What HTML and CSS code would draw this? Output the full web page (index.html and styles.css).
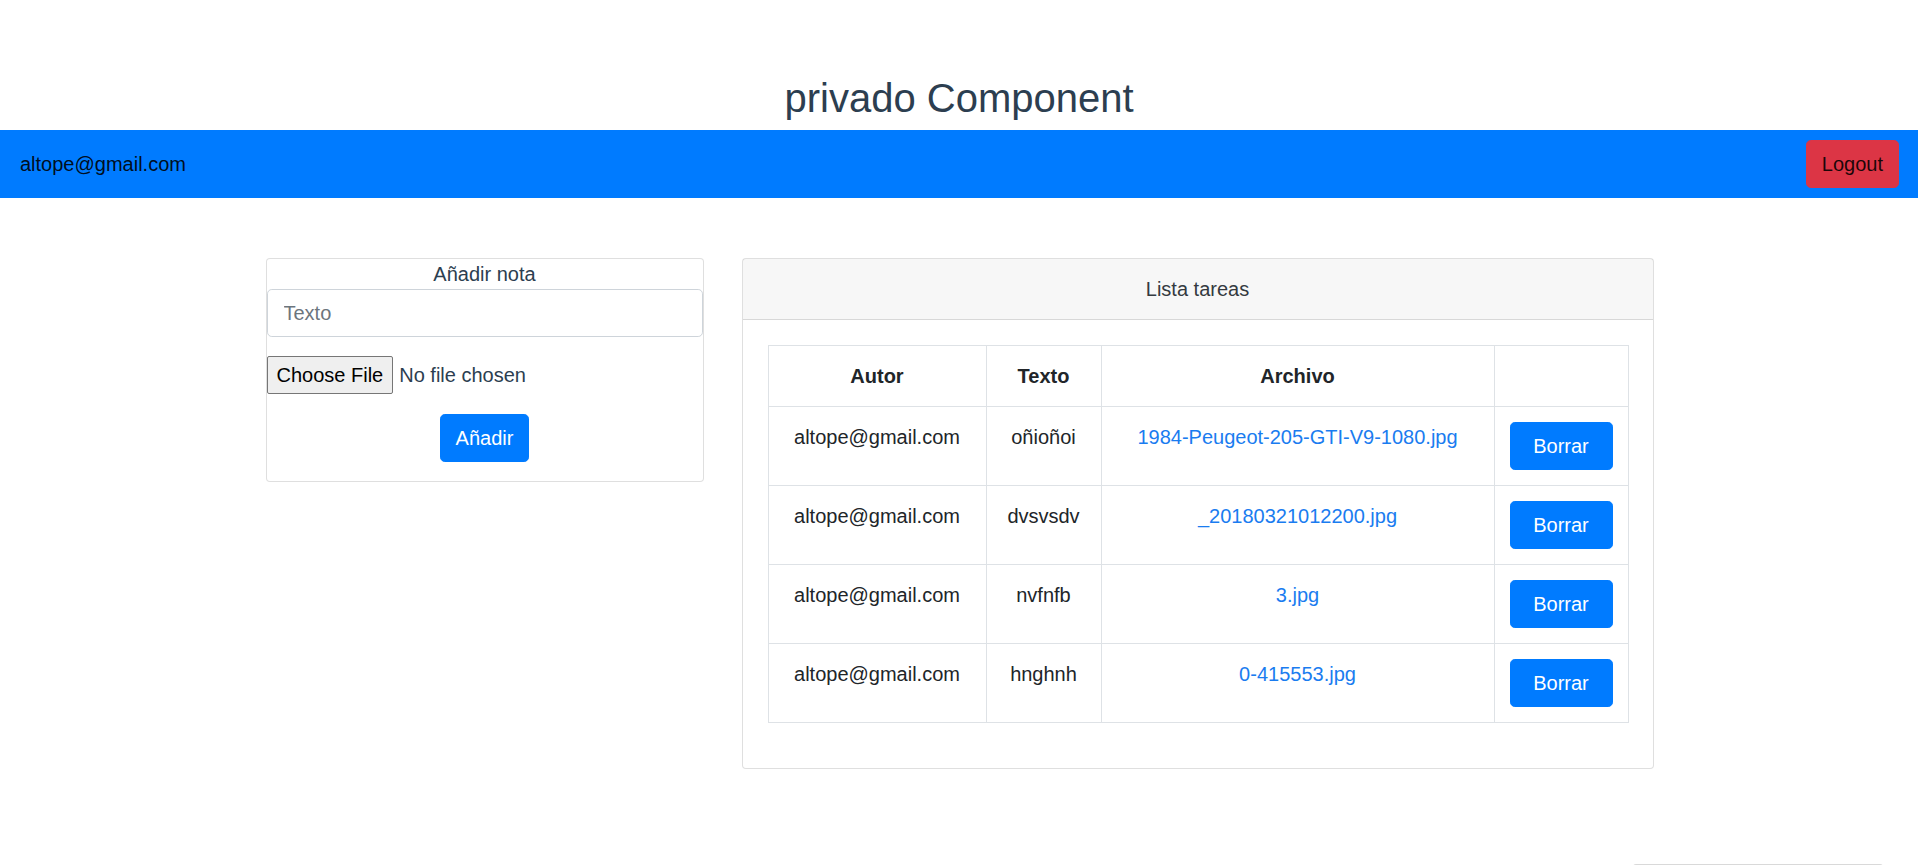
FILE: index.html
```html
<!DOCTYPE html>
<html lang="es">
<head>
<meta charset="utf-8">
<title>privado Component</title>
<link rel="stylesheet" href="styles.css">
</head>
<body>
<div class="app">
  <h1 class="title">privado Component</h1>
  <nav class="navbar">
    <span class="brand">altope@gmail.com</span>
    <button class="btn btn-logout">Logout</button>
  </nav>
  <main class="content">
    <section class="card card-add">
      <div class="add-title">Añadir nota</div>
      <input class="text-input" type="text" placeholder="Texto">
      <input class="file-input" type="file">
      <div class="add-actions">
        <button class="btn btn-primary">Añadir</button>
      </div>
    </section>
    <section class="card card-list">
      <header class="card-header">Lista tareas</header>
      <div class="card-body">
        <table class="table">
          <colgroup>
            <col class="c-autor"><col class="c-texto"><col class="c-archivo"><col class="c-accion">
          </colgroup>
          <thead>
            <tr><th>Autor</th><th>Texto</th><th>Archivo</th><th></th></tr>
          </thead>
          <tbody>
            <tr><td>altope@gmail.com</td><td>oñioñoi</td><td><a href="#">1984-Peugeot-205-GTI-V9-1080.jpg</a></td><td><button class="btn btn-primary btn-borrar">Borrar</button></td></tr>
            <tr><td>altope@gmail.com</td><td>dvsvsdv</td><td><a href="#">_20180321012200.jpg</a></td><td><button class="btn btn-primary btn-borrar">Borrar</button></td></tr>
            <tr><td>altope@gmail.com</td><td>nvfnfb</td><td><a href="#">3.jpg</a></td><td><button class="btn btn-primary btn-borrar">Borrar</button></td></tr>
            <tr><td>altope@gmail.com</td><td>hnghnh</td><td><a href="#">0-415553.jpg</a></td><td><button class="btn btn-primary btn-borrar">Borrar</button></td></tr>
          </tbody>
        </table>
      </div>
    </section>
  </main>
  <div class="toast-peek"></div>
</div>
</body>
</html>
```
FILE: styles.css
```css
* { box-sizing: border-box; }
html, body { margin: 0; padding: 0; }
body {
  font-family: "Liberation Sans", Arial, Helvetica, sans-serif;
  font-size: 16px;
  line-height: 1.5;
  color: #212529;
  background: #fff;
}
.app {
  padding-top: 74px;
  text-align: center;
  color: #2c3e50;
  min-height: 865px;
}
.title {
  margin: 0 0 8px;
  font-size: 40px;
  line-height: 48px;
  font-weight: 400;
  color: #2c3e50;
}
.navbar {
  height: 68px;
  background: #007bff;
  display: flex;
  align-items: center;
  justify-content: space-between;
  padding: 10px 19px 10px 20px;
}
.brand {
  font-size: 20px;
  line-height: 30px;
  color: rgba(0, 0, 0, 0.9);
}
.btn {
  font-family: inherit;
  font-size: 20px;
  line-height: 30px;
  height: 48px;
  padding: 8px 15px;
  border: 1px solid transparent;
  border-radius: 4.8px;
  cursor: pointer;
}
.btn-logout {
  background: #dc3545;
  border-color: #dc3545;
  color: rgba(0, 0, 0, 0.88);
}
.btn-primary {
  background: #007bff;
  border-color: #007bff;
  color: #fff;
}
.content {
  display: flex;
  justify-content: center;
  align-items: flex-start;
  gap: 38px;
  margin-top: 60px;
  padding-left: 1px;
}
.card {
  background: #fff;
  border: 1px solid rgba(0, 0, 0, 0.125);
  border-radius: 4px;
}
.card-add {
  width: 438px;
  display: flex;
  flex-direction: column;
  padding-bottom: 19px;
}
.add-title {
  font-size: 20px;
  line-height: 30px;
  color: #2c3e50;
}
.text-input {
  display: block;
  width: 100%;
  height: 48px;
  padding: 8px 16px;
  font-family: inherit;
  font-size: 20px;
  line-height: 30px;
  color: #495057;
  border: 1px solid #ced4da;
  border-radius: 4.8px;
  background: #fff;
}
.text-input::placeholder { color: #6c757d; }
.file-input {
  display: block;
  margin-top: 19px;
  height: 38px;
  font-family: inherit;
  font-size: 20px;
  line-height: 36px;
  color: #2c3e50;
  text-align: left;
}
.file-input::file-selector-button {
  font-family: inherit;
  font-size: 20px;
  height: 38px;
  padding: 0 9px;
  margin-right: 6px;
  color: #000;
  background: #efefef;
  border: 1px solid #767676;
  border-radius: 2px;
}
.add-actions {
  margin-top: 20px;
  display: flex;
  justify-content: center;
}
.card-list { width: 912px; }
.card-header {
  padding: 15px 25px;
  font-size: 20px;
  line-height: 30px;
  background: rgba(0, 0, 0, 0.03);
  border-bottom: 1px solid rgba(0, 0, 0, 0.125);
  color: #343a40;
}
.card-body { padding: 25px; }
.table {
  width: 860px;
  border-collapse: collapse;
  margin-bottom: 20px;
  font-size: 20px;
  line-height: 30px;
  color: #212529;
  table-layout: fixed;
}
.c-autor { width: 218px; }
.c-texto { width: 115px; }
.c-archivo { width: 393px; }
.c-accion { width: 134px; }
.table th, .table td {
  border: 1px solid #dee2e6;
  padding: 15px;
  vertical-align: top;
  text-align: center;
}
.table th { font-weight: 700; }
.table a {
  color: #1a7cf0;
  text-decoration: none;
}
.btn-borrar {
  display: block;
  width: 100%;
  padding: 8px 0;
}
.toast-peek {
  position: fixed;
  left: 1633px;
  top: 864px;
  width: 250px;
  height: 40px;
  background: #fff;
  border-top: 1px solid #d9d9d9;
  border-radius: 3px;
}
```
